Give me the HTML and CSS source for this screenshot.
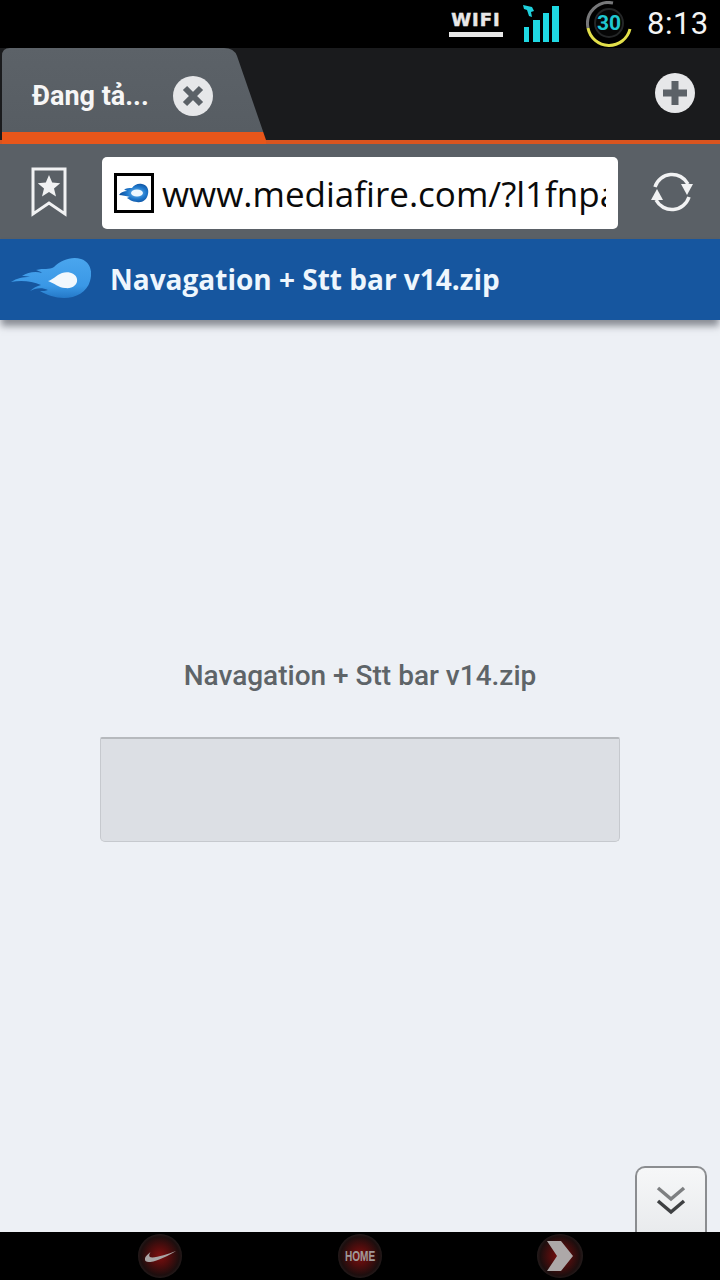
FILE: index.html
```html
<!DOCTYPE html>
<html lang="vi">
<head>
<meta charset="utf-8">
<title>Navagation + Stt bar v14.zip</title>
<link rel="stylesheet" href="styles.css">
</head>
<body>
<div class="screen">
  <header class="status">
    <div class="wifi"><span class="wifi-text">WIFI</span><span class="wifi-line"></span></div>
    <svg class="signal" width="40" height="40" viewBox="0 0 40 40">
      <path d="M1 1l9 2 2 4-3 1 1 5-3-1-2-6-3-1z" fill="#1fd0dc"/>
      <rect x="2" y="23" width="5" height="15" fill="#1fd9e3"/>
      <rect x="11" y="16" width="7" height="22" fill="#1fd9e3"/>
      <rect x="21" y="9" width="6" height="29" fill="#1fd9e3"/>
      <rect x="30" y="2" width="7" height="36" fill="#1fd9e3"/>
    </svg>
    <svg class="battery" width="46" height="46" viewBox="0 0 46 46">
      <path d="M27 2A21 21 0 0 0 2 27" fill="none" stroke="#77787a" stroke-width="3"/>
      <path d="M2 27A21.5 21.5 0 0 0 44 28" fill="none" stroke="#e3e04a" stroke-width="3"/>
      <circle cx="23" cy="22" r="14" fill="#060606" stroke="#242627" stroke-width="2"/>
      <text x="23" y="29" text-anchor="middle" class="battery-text">30</text>
    </svg>
    <span class="clock">8:13</span>
  </header>

  <nav class="tabs">
    <div class="tab">
      <span class="tab-title">Đang tả...</span>
      <svg class="tab-close" width="40" height="40" viewBox="0 0 40 40">
        <circle cx="20" cy="20" r="20" fill="#e6e7e9"/>
        <path d="M12 12l16 16M28 12L12 28" stroke="#5b6167" stroke-width="6"/>
      </svg>
    </div>
    <svg class="tab-add" width="40" height="40" viewBox="0 0 40 40">
      <circle cx="20" cy="20" r="20" fill="#e6e7e9"/>
      <path d="M20 8v24M8 20h24" stroke="#5b6167" stroke-width="7"/>
    </svg>
  </nav>

  <div class="toolbar">
    <svg class="bookmark" width="36" height="50" viewBox="0 0 36 50">
      <path d="M2 2h32v45L18 36 2 47z" fill="none" stroke="#f1f2f3" stroke-width="3"/>
      <path d="M18 8l3.2 7.6 8 .6-6.2 5.2 2 8L18 25l-7 4.4 2-8-6.2-5.2 8-.6z" fill="#f1f2f3"/>
    </svg>
    <div class="url">
      <span class="favicon">
        <svg width="30" height="24" viewBox="0 0 30 24">
          <defs>
            <radialGradient id="fav" cx="60%" cy="50%" r="60%">
              <stop offset="0" stop-color="#7cc4f5"/>
              <stop offset=".55" stop-color="#1f78cc"/>
              <stop offset="1" stop-color="#0b4a96"/>
            </radialGradient>
          </defs>
          <path d="M0 14c2-3 5-4 8-4-1-1-2-1-3-1 2-2 5-2 8-2 2-3 6-5 10-4 5 1 7 5 6 10-1 6-6 9-11 8-5 0-8-3-10-4 1-1 2-1 3-1-4-1-8-2-11-2z" fill="url(#fav)"/>
          <ellipse cx="18" cy="12" rx="6" ry="3.5" fill="#eef8ff"/>
        </svg>
      </span>
      <span class="url-text">www.mediafire.com/?l1fnpa</span>
    </div>
    <svg class="reload" width="44" height="44" viewBox="0 0 44 44">
      <path d="M5 17A18 18 0 0 1 38 14" fill="none" stroke="#f1f2f3" stroke-width="3.5"/>
      <path d="M39 27A18 18 0 0 1 6 30" fill="none" stroke="#f1f2f3" stroke-width="3.5"/>
      <path d="M31 14h12l-6 11z" fill="#f1f2f3"/>
      <path d="M1 30h12L7 19z" fill="#f1f2f3"/>
    </svg>
  </div>

  <div class="site-header">
    <svg class="logo" width="80" height="46" viewBox="0 0 80 46">
      <defs>
        <linearGradient id="flame" x1="0" y1="0" x2="0" y2="1">
          <stop offset="0" stop-color="#4aa6ee"/>
          <stop offset=".7" stop-color="#3a98e6"/>
          <stop offset="1" stop-color="#2478c8"/>
        </linearGradient>
      </defs>
      <path d="M0 26c6-4 12-5 19-5-3-1-5-1-8-1 6-4 14-5 20-3-2-2-4-2-6-3 8-2 13 0 18-3 7-7 18-11 27-8 9 3 12 12 9 22-3 11-14 17-26 17-9 0-17-3-24-7 3 0 6 0 8-1-6-3-13-2-18 1 3-3 7-5 11-6-9-4-20-5-30-3z" fill="url(#flame)"/>
      <path d="M37 25c5-1 8-6 14-8 6-2 14 0 15 6 1 6-5 10-12 9-6 0-11-5-17-7z" fill="#f2f8fd"/>
    </svg>
    <h1 class="site-title">Navagation + Stt bar v14.zip</h1>
  </div>

  <main class="content">
    <p class="file-name">Navagation + Stt bar v14.zip</p>
    <div class="ad-box"></div>
    <button class="more" type="button" aria-label="more">
      <svg width="30" height="30" viewBox="0 0 30 30">
        <path d="M2 2l13 11L28 2" fill="none" stroke="#7d7f81" stroke-width="3.5"/>
        <path d="M2 15l13 11 13-11" fill="none" stroke="#3e4042" stroke-width="3.5"/>
      </svg>
    </button>
  </main>

  <footer class="navbar">
    <div class="orb">
      <svg width="31" height="11" viewBox="0 0 34 12"><path d="M0 10C-1 6 3 4 6 1 4 5 4 7 8 7 14 7 26 3 34 0 26 5 14 11 6 12 3 12 1 12 0 10z" fill="#a9a5a5"/></svg>
    </div>
    <div class="orb"><span class="orb-home">HOME</span></div>
    <div class="orb orb-next">
      <svg width="26" height="30" viewBox="0 0 26 30"><path d="M0 0h14l12 15-12 15H0l10-15z" fill="#ada8a8"/></svg>
    </div>
  </footer>
</div>
</body>
</html>
```
FILE: styles.css
```css
* { box-sizing: border-box; }
html, body { margin: 0; padding: 0; }
body { width: 720px; height: 1280px; overflow: hidden; font-family: "Roboto", sans-serif; }
.screen { width: 720px; height: 1280px; display: flex; flex-direction: column; background: #edf0f5; }

.status { height: 48px; flex: none; background: #000; display: flex; align-items: center; padding-right: 12px; }
.wifi { margin-left: 449px; width: 54px; display: flex; flex-direction: column; align-items: center; gap: 4px; }
.wifi-text { font: 700 18px/17px "DejaVu Sans", sans-serif; color: #e8e8e8; letter-spacing: 1px; -webkit-text-stroke: .5px #e8e8e8; }
.wifi-line { width: 54px; height: 5px; background: #e8e8e8; }
.signal { margin-left: 19px; flex: none; }
.battery { margin-left: 24px; flex: none; }
.battery-text { font: 700 21px "Roboto", sans-serif; fill: #1fc8d2; }
.clock { margin-left: 15px; font: 400 31px/48px "Roboto", sans-serif; color: #f4f4f4; letter-spacing: .5px; }

.tabs { height: 96px; flex: none; background: #1a1b1d; border-bottom: 4px solid #d9541f; display: flex; align-items: flex-start; padding-left: 2px; padding-right: 25px; justify-content: space-between; }
.tab { width: 264px; height: 96px; background: linear-gradient(#5c6268, #575d63); clip-path: path("M0 96V8Q0 0 8 0H222Q232 0 235 8L264 92V96Z"); display: flex; align-items: center; padding: 12px 0 0 30px; border-bottom: 12px solid #e8561a; }
.tab-title { width: 141px; font-weight: 700; font-size: 27px; color: #f6f6f6; white-space: nowrap; }
.tab-close { flex: none; }
.tab-add { flex: none; margin-top: 25px; }

.toolbar { height: 95px; flex: none; background: #5a6066; display: flex; align-items: center; padding: 0 26px 0 31px; }
.bookmark { flex: none; }
.url { width: 516px; height: 72px; margin: 3px 0 0 35px; background: #fff; border-radius: 5px; display: flex; align-items: center; padding: 0 12px 0 12px; overflow: hidden; }
.favicon { flex: none; width: 40px; height: 40px; border: 3px solid #000; display: flex; align-items: center; justify-content: center; }
.url-text { margin-left: 8px; font: 400 35px "Open Sans", sans-serif; color: #0a0a0a; white-space: nowrap; overflow: hidden; flex: 1; }
.reload { flex: none; margin-left: 32px; }

.site-header { height: 81px; flex: none; background: #16569f; display: flex; align-items: center; padding-left: 11px; padding-bottom: 2px; box-shadow: 0 7px 7px -1px rgba(70, 75, 85, .6); position: relative; }
.logo { flex: none; }
.site-title { margin: 0 0 0 19px; font: 700 28px "Open Sans", sans-serif; color: #eef6fd; white-space: nowrap; }

.content { flex: 1; display: flex; flex-direction: column; align-items: center; position: relative; padding-top: 337px; }
.file-name { margin: 0; font-weight: 500; font-size: 28px; line-height: 38px; color: #5e6468; }
.ad-box { width: 520px; height: 105px; margin-top: 42px; background: #dcdfe4; border: 1px solid #c6c9ce; border-top: 2px solid #b6b9bd; border-radius: 2px 2px 5px 5px; }
.more { position: absolute; right: 13px; bottom: 0; width: 72px; height: 66px; padding: 18px 0 0; border: 2px solid #8b8d90; border-bottom: 0; border-radius: 10px 10px 0 0; background: linear-gradient(#f6f7f8, #e9ebed); display: flex; justify-content: center; align-items: flex-start; }

.navbar { height: 48px; flex: none; background: #000; display: flex; align-items: center; padding-left: 138px; }
.orb { width: 44px; height: 44px; border-radius: 50%; background: radial-gradient(circle, #7e0f0f 0, #4f0d0d 32%, #1d0e0e 62%, #2c2c2c 84%, #141414 100%); display: flex; align-items: center; justify-content: center; }
.orb + .orb { margin-left: 156px; }
.orb-next { width: 46px; }
.orb + .orb-next { margin-left: 155px; }
.orb-home { font: 700 14px "Liberation Sans", sans-serif; color: #a09a9a; transform: scaleX(.72); }
```
